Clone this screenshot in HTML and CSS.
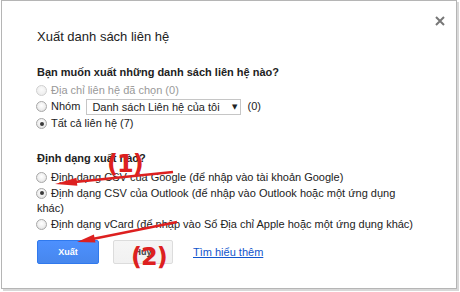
FILE: index.html
```html
<!DOCTYPE html>
<html>
<head>
<meta charset="utf-8">
<link rel="stylesheet" href="styles.css">
</head>
<body>
<div class="dialog">
  <div class="close">
    <svg width="10" height="10" viewBox="0 0 10 10"><path d="M1 1L9 9M9 1L1 9" stroke="#777" stroke-width="2"/></svg>
  </div>
  <div class="title">Xuất danh sách liên hệ</div>
  <div class="heading h1">Bạn muốn xuất những danh sách liên hệ nào?</div>
  <div class="opts">
    <div class="opt disabled"><span class="radio"></span>Địa chỉ liên hệ đã chọn (0)</div>
    <div class="opt"><span class="radio"></span>Nhóm <span class="select">Danh sách Liên hệ của tôi<span class="caret">▼</span></span> (0)</div>
    <div class="opt"><span class="radio checked"></span>Tất cả liên hệ (7)</div>
  </div>
  <div class="heading h2">Định dạng xuất nào?</div>
  <div class="opts opts2">
    <div class="opt"><span class="radio"></span>Định dạng CSV của Google (để nhập vào tài khoản Google)</div>
    <div class="opt"><span class="radio checked"></span>Định dạng CSV của Outlook (để nhập vào Outlook hoặc một ứng dụng khác)</div>
    <div class="opt"><span class="radio"></span>Định dạng vCard (để nhập vào Sổ Địa chỉ Apple hoặc một ứng dụng khác)</div>
  </div>
  <div class="buttons">
    <span class="btn primary">Xuất</span>
    <span class="btn">Hủy</span>
    <a class="link" href="#">Tìm hiểu thêm</a>
  </div>
</div>
<svg class="annot" width="460" height="292" viewBox="0 0 460 292">
  <line x1="173" y1="172" x2="70" y2="182.5" stroke="#dd2020" stroke-width="2.5"/>
  <polygon points="55,184 77.3,185.8 76.5,177.8" fill="#dd2020"/>
  <line x1="177" y1="222" x2="90" y2="239.4" stroke="#dd2020" stroke-width="2.5"/>
  <polygon points="77,242 95.5,242.4 93.9,234.6" fill="#dd2020"/>
</svg>
<span class="num n1">(1)</span>
<span class="num n2">(2)</span>
</body>
</html>
```

FILE: styles.css
```css
html, body {
  margin: 0;
  padding: 0;
  background: #fff;
  width: 460px;
  height: 292px;
  overflow: hidden;
}
body {
  position: relative;
  font-family: Arial, "Liberation Sans", sans-serif;
  font-size: 11px;
  color: #222;
}
.dialog {
  position: relative;
  box-sizing: border-box;
  margin-left: 1px;
  width: 456px;
  height: 289px;
  border: 1px solid #b5b5b5;
  box-shadow: 2px 2px 0 #d8d8d8;
  background: #fff;
  padding: 26px 0 0 35px;
}
.close {
  position: absolute;
  left: 433px;
  top: 15px;
  width: 10px;
  height: 10px;
}
.close svg { display: block; }
.title {
  font-size: 13px;
  line-height: 20px;
  color: #222;
}
.heading {
  font-weight: bold;
  line-height: 16px;
  color: #222;
}
.h1 { margin-top: 17px; }
.h2 { margin-top: 19px; }
.opts {
  margin-top: 2px;
  line-height: 16px;
  color: #222;
  width: 381px;
}
.opts2 {
  margin-top: 4px;
  line-height: 15.5px;
}
.disabled { color: #999; }
.radio {
  display: inline-block;
  box-sizing: border-box;
  width: 11px;
  height: 11px;
  margin: 0 4px 0 -1px;
  vertical-align: -2px;
  border: 1px solid #a8a8a8;
  border-radius: 50%;
  background: radial-gradient(circle at 50% 40%, #ffffff 0%, #eeeeee 55%, #d4d4d4 100%);
  position: relative;
}
.disabled .radio {
  border-color: #d0d0d0;
  background: radial-gradient(circle at 50% 40%, #fbfbfb 0%, #f0f0f0 60%, #e6e6e6 100%);
}
.radio.checked::after {
  content: "";
  position: absolute;
  left: 2.5px;
  top: 2.5px;
  width: 4px;
  height: 4px;
  border-radius: 50%;
  background: #3a3a3a;
}
.select {
  display: inline-flex;
  align-items: center;
  justify-content: space-between;
  box-sizing: border-box;
  width: 155px;
  height: 16px;
  margin: 1px 3px 0 3px;
  padding: 0 3px 0 5px;
  border: 1px solid #c6c6c6;
  vertical-align: top;
  line-height: 14px;
  color: #222;
  background: #fff;
}
.caret {
  font-size: 7px;
  color: #222;
  font-family: "DejaVu Sans", sans-serif;
}
.buttons {
  margin-top: 8px;
  display: flex;
  align-items: center;
  height: 24px;
}
.btn {
  box-sizing: border-box;
  height: 24px;
  width: 60px;
  display: flex;
  align-items: center;
  justify-content: center;
  font-size: 9px;
  font-weight: bold;
  color: #444;
  border: 1px solid #dcdcdc;
  border-radius: 2px;
  background: linear-gradient(#f5f5f5, #f1f1f1);
  margin-right: 14px;
}
.btn.primary {
  width: 62px;
  color: #fff;
  border-color: #3079ed;
  background: linear-gradient(#4d90fe, #4787ed);
}
.link {
  margin-left: 6px;
  color: #15c;
  text-decoration: underline;
  font-size: 11px;
  line-height: 16px;
}
.annot {
  position: absolute;
  left: 0;
  top: 0;
  pointer-events: none;
}
.num {
  position: absolute;
  font-family: "DejaVu Sans", sans-serif;
  font-weight: bold;
  font-size: 24px;
  line-height: 24px;
  color: #dd2020;
  letter-spacing: -1px;
}
.n1 { left: 107px; top: 152px; }
.n2 { left: 131px; top: 245px; }
```
